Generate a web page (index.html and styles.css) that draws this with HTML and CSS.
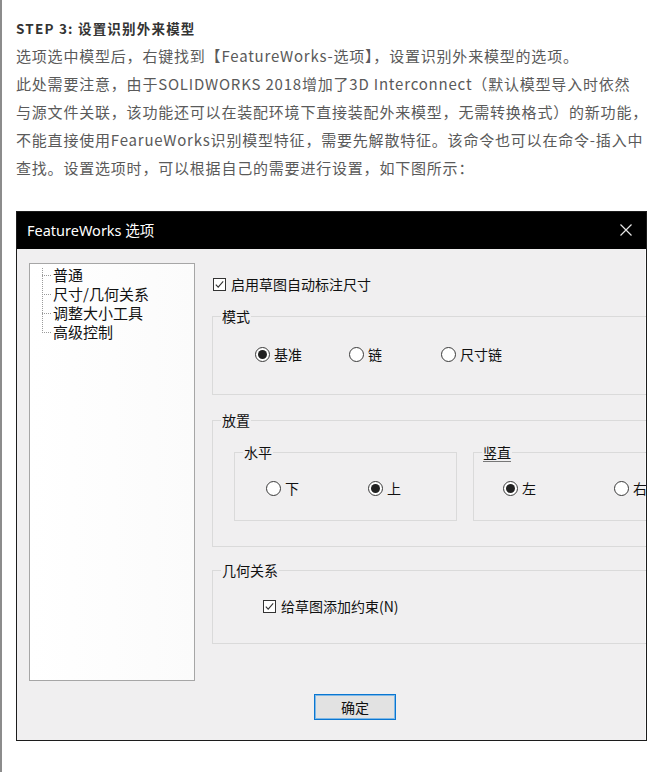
FILE: index.html
```html
<!DOCTYPE html>
<html lang="zh-CN">
<head>
<meta charset="utf-8">
<title>STEP 3</title>
<link rel="stylesheet" href="styles.css">
</head>
<body>
<div class="page">
  <h3 class="step">STEP 3: 设置识别外来模型</h3>
  <p class="para">选项选中模型后，右键找到【FeatureWorks-选项】，设置识别外来模型的选项。<br>此处需要注意，由于SOLIDWORKS 2018增加了3D Interconnect（默认模型导入时依然<br>与源文件关联，该功能还可以在装配环境下直接装配外来模型，无需转换格式）的新功能，<br>不能直接使用FearueWorks识别模型特征，需要先解散特征。该命令也可以在命令-插入中<br>查找。设置选项时，可以根据自己的需要进行设置，如下图所示：</p>

  <div class="dialog">
    <div class="titlebar">
      <span class="title">FeatureWorks 选项</span>
      <svg class="close" width="12" height="12" viewBox="0 0 12 12"><path d="M0.5 0.5 L11.5 11.5 M11.5 0.5 L0.5 11.5" stroke="#e6e6e6" stroke-width="1.2" fill="none"/></svg>
    </div>
    <div class="dbody">
      <div class="main">
        <div class="tree">
          <ul class="tree-list">
            <li>普通</li>
            <li>尺寸/几何关系</li>
            <li>调整大小工具</li>
            <li>高级控制</li>
          </ul>
        </div>
        <div class="options">
          <div class="check-row top-check">
            <span class="cbox"><svg width="13" height="13" viewBox="0 0 13 13"><rect x="0.5" y="0.5" width="12" height="12" fill="#fff" stroke="#333"/><path d="M2.8 6.6 L5.2 9.2 L10.2 3.4" stroke="#333" stroke-width="1.1" fill="none"/></svg></span>
            <span>启用草图自动标注尺寸</span>
          </div>

          <fieldset class="group g-mode">
            <legend>模式</legend>
            <div class="radios r-mode">
              <span class="opt"><span class="radio on"></span>基准</span>
              <span class="opt"><span class="radio"></span>链</span>
              <span class="opt"><span class="radio"></span>尺寸链</span>
            </div>
          </fieldset>

          <fieldset class="group g-place">
            <legend>放置</legend>
            <div class="subgroups">
              <fieldset class="group sub sub-h">
                <legend>水平</legend>
                <div class="radios r-h">
                  <span class="opt"><span class="radio"></span>下</span>
                  <span class="opt"><span class="radio on"></span>上</span>
                </div>
              </fieldset>
              <fieldset class="group sub sub-v">
                <legend class="focus">竖直</legend>
                <div class="radios r-v">
                  <span class="opt"><span class="radio on"></span>左</span>
                  <span class="opt"><span class="radio"></span>右</span>
                </div>
              </fieldset>
            </div>
          </fieldset>

          <fieldset class="group g-geo">
            <legend>几何关系</legend>
            <div class="check-row geo-check">
              <span class="cbox"><svg width="13" height="13" viewBox="0 0 13 13"><rect x="0.5" y="0.5" width="12" height="12" fill="#fff" stroke="#333"/><path d="M2.8 6.6 L5.2 9.2 L10.2 3.4" stroke="#333" stroke-width="1.1" fill="none"/></svg></span>
              <span>给草图添加约束(N)</span>
            </div>
          </fieldset>
        </div>
      </div>
      <div class="footer">
        <button class="btn" type="button">确定</button>
      </div>
    </div>
  </div>
</div>
</body>
</html>
```

FILE: styles.css
```css
* { box-sizing: border-box; }
html, body { margin: 0; padding: 0; background: #fff; }
body {
  font-family: "Noto Sans CJK SC", "Noto Sans", sans-serif;
}
.page {
  min-height: 772px;
  border-left: 2px solid #8c8c8c;
  padding: 14px 0 0 14px;
  overflow: hidden;
}
.step {
  margin: 0;
  font-size: 13.5px;
  line-height: 28px;
  font-weight: bold;
  letter-spacing: 1.2px;
  color: #333;
}
.para {
  margin: 0;
  font-size: 15px;
  line-height: 28px;
  letter-spacing: 0.8px;
  color: #5a5a5a;
  white-space: nowrap;
}
.dialog {
  margin-top: 29px;
  width: 631px;
  border: 1px solid #1c1c1c;
  background: #f0eff0;
  overflow: hidden;
}
.titlebar {
  height: 37px;
  background: #000;
  display: flex;
  align-items: center;
  justify-content: space-between;
  padding: 0 14px 2px 10px;
}
.title {
  color: #fff;
  font-family: "Noto Sans", "Noto Sans CJK SC", sans-serif;
  font-size: 14.5px;
}
.close { display: block; }
.dbody {
  padding: 14px 0 20px 12px;
  border-right: 1px solid #fafafa;
}
.main {
  display: flex;
  gap: 17px;
  height: 418px;
}
.tree {
  flex: 0 0 166px;
  height: 418px;
  background: linear-gradient(90deg, #ffffff, #fbfbfb);
  border: 1px solid #a6a6a6;
  padding: 1px 0 0 23px;
}
.tree-list {
  list-style: none;
  margin: 0;
  padding: 0;
  position: relative;
  font-size: 15px;
  line-height: 19px;
  color: #111;
}
.tree-list::before {
  content: "";
  position: absolute;
  left: -11px;
  top: 3px;
  height: 63px;
  border-left: 1px dotted #9a9a9a;
}
.tree-list li { position: relative; }
.tree-list li::before {
  content: "";
  position: absolute;
  left: -11px;
  top: 10px;
  width: 9px;
  border-top: 1px dotted #9a9a9a;
}
.options {
  flex: 0 0 460px;
  font-size: 14px;
  color: #111;
}
.check-row {
  display: flex;
  align-items: center;
  gap: 5px;
  height: 20px;
  line-height: 20px;
}
.cbox { display: flex; }
.top-check { margin: 11px 0 0 1px; }
.group {
  margin: 0;
  border: 1px solid #dadada;
  padding: 0 0 0 8px;
  min-width: 0;
}
.group legend {
  padding: 0 1px;
  line-height: 20px;
  font-size: 14px;
}
.g-mode { margin-top: 12px; padding-top: 18px; padding-bottom: 30px; }
.g-place { margin-top: 15px; padding-bottom: 25px; }
.g-geo { margin-top: 13px; padding-top: 16px; padding-bottom: 27px; }
.subgroups {
  display: flex;
  gap: 16px;
  margin: 12px 0 0 13px;
}
.sub { padding-top: 16px; padding-bottom: 22px; }
.sub-h { flex: 0 0 223px; }
.sub-v { flex: 0 0 240px; }
.focus { text-decoration: underline; text-decoration-color: #777; text-underline-offset: 3px; }
.radios {
  display: grid;
  height: 20px;
  line-height: 20px;
  align-items: center;
}
.r-mode { grid-template-columns: 94px 92px auto; margin-left: 34px; }
.r-h { grid-template-columns: 102px auto; margin-left: 23px; }
.r-v { grid-template-columns: 111px auto; margin-left: 21px; }
.opt {
  display: flex;
  align-items: center;
  gap: 4px;
  white-space: nowrap;
}
.radio {
  width: 15px;
  height: 15px;
  border: 1px solid #3a3a3a;
  border-radius: 50%;
  background: #fff;
  display: inline-flex;
  align-items: center;
  justify-content: center;
  flex: 0 0 15px;
}
.radio.on::after {
  content: "";
  width: 9px;
  height: 9px;
  border-radius: 50%;
  background: #222;
}
.geo-check { margin-left: 42px; }
.footer {
  padding: 13px 0 0 285px;
}
.btn {
  display: block;
  width: 82px;
  height: 26px;
  background: #e2e2e2;
  border: 1px solid #0a76d1;
  box-shadow: inset 0 0 0 1px #7fb8e6;
  font-family: "Noto Sans CJK SC", sans-serif;
  font-size: 14px;
  color: #111;
  padding: 0;
}
```
